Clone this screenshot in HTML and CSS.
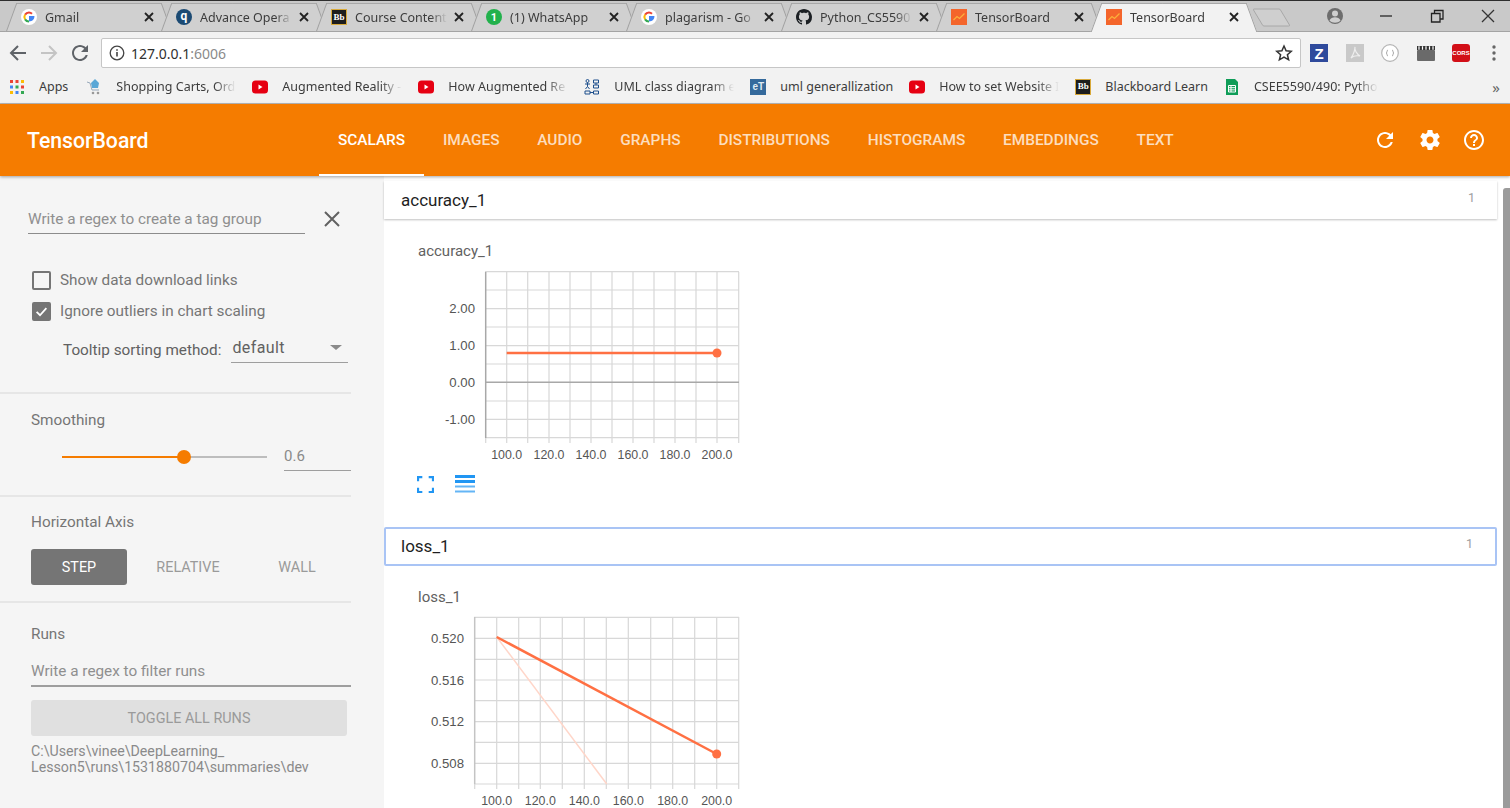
FILE: index.html
```html
<!DOCTYPE html>
<html lang="en">
<head>
    <meta charset="UTF-8">
    <title>TensorBoard</title>
    <link rel="stylesheet" href="styles.css">
</head>
<body>

<svg class="sprite" width="0" height="0">
    <symbol id="g-logo" viewBox="0 0 16 16">
        <circle cx="8" cy="8" r="8" fill="#fff"/>
        <path d="M8 7h5.4c.3 2.800-1.800 5.400-5.400 5.400" fill="#4285f4"/>
        <path d="M8 3.500a4.500 4.500 0 0 1 3 1.200" fill="none" stroke="#ea4335" stroke-width="2"/>
        <path d="M4.100 5.600A4.500 4.500 0 0 1 8 3.500" fill="none" stroke="#ea4335" stroke-width="2"/>
        <path d="M4.100 10.400a4.500 4.500 0 0 1 0-4.800" fill="none" stroke="#fbbc05" stroke-width="2"/>
        <path d="M8 12.500a4.500 4.500 0 0 1-3.900-2.100" fill="none" stroke="#34a853" stroke-width="2"/>
    </symbol>
    <symbol id="close-x" viewBox="0 0 12 12">
        <path d="M2 2l8 8M10 2l-8 8" fill="none" stroke="currentColor" stroke-width="1.800"/>
    </symbol>
    <symbol id="tb-logo" viewBox="0 0 16 16">
        <rect width="16" height="16" fill="#f4652b"/>
        <path d="M2.500 11l3.500-3.500 2.500 2 5-5" fill="none" stroke="#fbb03b" stroke-width="1.300"/>
    </symbol>
    <symbol id="yt-logo" viewBox="0 0 16 16">
        <rect y="1.500" width="16" height="13" rx="3.500" fill="#e60012"/>
        <path d="M6.500 5.500v5l4-2.500z" fill="#fff"/>
    </symbol>
</svg>

<div class="tabstrip">
    <div class="tab">
        <svg class="favicon"><use href="#g-logo"/></svg>
        <span class="tab-title">Gmail</span>
        <svg class="tab-close"><use href="#close-x"/></svg>
    </div>
    <div class="tab">
        <span class="favicon fav-q">q</span>
        <span class="tab-title">Advance Opera</span>
        <svg class="tab-close"><use href="#close-x"/></svg>
    </div>
    <div class="tab">
        <span class="favicon fav-bb">Bb</span>
        <span class="tab-title">Course Content</span>
        <svg class="tab-close"><use href="#close-x"/></svg>
    </div>
    <div class="tab">
        <span class="favicon fav-wa">1</span>
        <span class="tab-title">(1) WhatsApp</span>
        <svg class="tab-close"><use href="#close-x"/></svg>
    </div>
    <div class="tab">
        <svg class="favicon"><use href="#g-logo"/></svg>
        <span class="tab-title">plagarism - Go</span>
        <svg class="tab-close"><use href="#close-x"/></svg>
    </div>
    <div class="tab">
        <svg class="favicon" viewBox="0 0 16 16"><path fill="#1b1f23" d="M8 0C3.58 0 0 3.58 0 8c0 3.54 2.29 6.53 5.47 7.59.4.07.55-.17.55-.38 0-.19-.01-.82-.01-1.49-2.01.37-2.53-.49-2.69-.94-.09-.23-.48-.94-.82-1.13-.28-.15-.68-.52-.01-.53.63-.01 1.08.58 1.23.82.72 1.21 1.87.87 2.33.66.07-.52.28-.87.51-1.07-1.78-.2-3.64-.89-3.64-3.95 0-.87.31-1.59.82-2.15-.08-.2-.36-1.02.08-2.12 0 0 .67-.21 2.2.82.64-.18 1.32-.27 2-.27.68 0 1.36.09 2 .27 1.53-1.04 2.2-.82 2.2-.82.44 1.1.16 1.92.08 2.12.51.56.82 1.27.82 2.15 0 3.07-1.87 3.75-3.65 3.95.29.25.54.73.54 1.48 0 1.07-.01 1.93-.01 2.2 0 .21.15.46.55.38A8.013 8.013 0 0016 8c0-4.42-3.58-8-8-8z"/></svg>
        <span class="tab-title">Python_CS5590</span>
        <svg class="tab-close"><use href="#close-x"/></svg>
    </div>
    <div class="tab">
        <svg class="favicon"><use href="#tb-logo"/></svg>
        <span class="tab-title">TensorBoard</span>
        <svg class="tab-close"><use href="#close-x"/></svg>
    </div>
    <div class="tab active">
        <svg class="favicon"><use href="#tb-logo"/></svg>
        <span class="tab-title">TensorBoard</span>
        <svg class="tab-close"><use href="#close-x"/></svg>
    </div>
    <svg class="newtab" viewBox="0 0 38 19"><path d="M1 1h25q1 0 1.500 1l9 15q.5 1-1 1H11q-1 0-1.500-1L.5 2q-.5-1 .5-1z" fill="#cfcfcf" stroke="#a8a8a8"/></svg>

    <div class="window-controls">
        <svg viewBox="0 0 20 20"><circle cx="10" cy="10" r="8" fill="#6d6d6d"/><circle cx="10" cy="7.500" r="3" fill="#cfcfcf"/><path d="M4.500 14.500c1-2.500 3-3.200 5.500-3.200s4.500.7 5.500 3.200c-1.500 1.500-3.300 2.200-5.500 2.200s-4-.7-5.500-2.200z" fill="#cfcfcf"/></svg>
        <svg viewBox="0 0 20 20"><path d="M4 10h12" stroke="#333" stroke-width="1.400"/></svg>
        <svg viewBox="0 0 20 20"><path d="M4.500 7.500h8.500v8.500H4.500zM7.500 7.500V4.500H16v8.500h-3" fill="none" stroke="#222" stroke-width="1.300"/></svg>
        <svg viewBox="0 0 20 20"><path d="M4 4l12 12M16 4L4 16" stroke="#333" stroke-width="1.300"/></svg>
    </div>
</div>

<div class="toolbar">
    <svg class="nav-icon" viewBox="0 0 24 24"><path d="M20 12H5M12 5l-7 7 7 7" fill="none" stroke="#5f6368" stroke-width="2"/></svg>
    <svg class="nav-icon" viewBox="0 0 24 24"><path d="M4 12h15M12 5l7 7-7 7" fill="none" stroke="#c4c4c4" stroke-width="2"/></svg>
    <svg class="nav-icon" viewBox="0 0 24 24"><path fill="#5f6368" d="M17.650 6.350C16.200 4.900 14.210 4 12 4c-4.420 0-7.990 3.580-7.990 8s3.570 8 7.990 8c3.730 0 6.840-2.550 7.730-6h-2.080c-.82 2.330-3.040 4-5.650 4-3.310 0-6-2.690-6-6s2.690-6 6-6c1.660 0 3.140.69 4.220 1.780L13 11h7V4l-2.350 2.350z"/></svg>
    <div class="omnibox">
        <svg class="info-icon" viewBox="0 0 16 16"><circle cx="8" cy="8" r="6.800" fill="none" stroke="#444" stroke-width="1.300"/><path d="M8 7v4.500M8 4.300v1.500" stroke="#444" stroke-width="1.600"/></svg>
        <span class="url">127.0.0.1<span class="url-port">:6006</span></span>
        <svg class="star" viewBox="0 0 18 18"><path d="M9 2l2.100 4.800 5.200.5-3.900 3.400 1.200 5.100L9 13.100l-4.600 2.700 1.200-5.100L1.700 7.300l5.200-.5z" fill="none" stroke="#333" stroke-width="1.500"/></svg>
    </div>
    <div class="extensions">
        <span class="ext ext-z">Z</span>
        <svg class="ext" viewBox="0 0 18 18"><rect width="18" height="18" fill="#c9c9c9"/><path d="M9 3c-1 3 2 7 5 9-3-.5-7 0-9 2 2-3 4-8 4-11z" fill="none" stroke="#eee" stroke-width="1.200"/></svg>
        <svg class="ext" viewBox="0 0 18 18"><circle cx="9" cy="9" r="8.300" fill="#fff" stroke="#b5b5b5" stroke-width="1.200"/><path d="M7 6c-1.500 0-.5 3-2 3 1.500 0 .5 3 2 3M11 6c1.500 0 .5 3 2 3-1.500 0-.5 3-2 3" fill="none" stroke="#999" stroke-width=".9"/></svg>
        <svg class="ext" viewBox="0 0 18 18"><rect y="6" width="18" height="11" rx="1" fill="#6a6a6a"/><rect y="2" width="18" height="4" fill="#333"/><path d="M2 2.200v3.600M5.500 2.200v3.600M9 2.200v3.600M12.500 2.200v3.600M16 2.200v3.600" stroke="#fff" stroke-width="1.200"/></svg>
        <span class="ext ext-cors">CORS</span>
        <svg class="ext ext-menu" viewBox="0 0 18 18"><circle cx="9" cy="3" r="1.700" fill="#666"/><circle cx="9" cy="9" r="1.700" fill="#666"/><circle cx="9" cy="15" r="1.700" fill="#666"/></svg>
    </div>
</div>

<div class="bookmarks">
    <a class="bm">
        <svg class="bm-icon" viewBox="0 0 16 16">
            <path d="M1 1h3v3H1z" fill="#ea4335"/><path d="M6.500 1h3v3h-3z" fill="#ea4335"/><path d="M12 1h3v3h-3z" fill="#fbbc05"/>
            <path d="M1 6.500h3v3H1z" fill="#4285f4"/><path d="M6.500 6.500h3v3h-3z" fill="#34a853"/><path d="M12 6.500h3v3h-3z" fill="#ea4335"/>
            <path d="M1 12h3v3H1z" fill="#fbbc05"/><path d="M6.500 12h3v3h-3z" fill="#4285f4"/><path d="M12 12h3v3h-3z" fill="#34a853"/>
        </svg>
        <span class="bm-text short">Apps</span>
    </a>
    <a class="bm">
        <svg class="bm-icon" viewBox="0 0 16 16"><path d="M1 3l3 1 2 7h7" fill="none" stroke="#9ab" stroke-width="1"/><path d="M9 0l4 4-1 5H6L5 4z" fill="#5aa7d6"/><circle cx="7" cy="14" r="1.300" fill="#999"/><circle cx="12" cy="14" r="1.300" fill="#999"/></svg>
        <span class="bm-text">Shopping Carts, Ord</span>
    </a>
    <a class="bm">
        <svg class="bm-icon"><use href="#yt-logo"/></svg>
        <span class="bm-text">Augmented Reality -</span>
    </a>
    <a class="bm">
        <svg class="bm-icon"><use href="#yt-logo"/></svg>
        <span class="bm-text">How Augmented Re</span>
    </a>
    <a class="bm">
        <svg class="bm-icon" viewBox="0 0 16 16"><g fill="none" stroke="#1d4f8c" stroke-width="1"><circle cx="3.500" cy="2" r="1.500"/><path d="M3.500 3.500v4M1 5h5M1.500 10l2-2.500 2 2.500"/><path d="M9.500 1h5v3h-5zM9.500 6h5v3h-5zM1 12h5v3H1zM9.500 12h5v3h-5zM6 13.500h3.500M12 4v2"/></g></svg>
        <span class="bm-text">UML class diagram e</span>
    </a>
    <a class="bm">
        <span class="bm-icon fav-et">eT</span>
        <span class="bm-text short">uml generallization</span>
    </a>
    <a class="bm">
        <svg class="bm-icon"><use href="#yt-logo"/></svg>
        <span class="bm-text">How to set Website I</span>
    </a>
    <a class="bm">
        <span class="bm-icon fav-bb">Bb</span>
        <span class="bm-text short">Blackboard Learn</span>
    </a>
    <a class="bm">
        <svg class="bm-icon" viewBox="0 0 16 16"><path d="M2 0h9l3 3v13H2z" fill="#0f9d58"/><path d="M4.500 6.500h7v6.500h-7zM4.500 8.700h7M4.500 10.900h7M7 6.500V13" fill="none" stroke="#fff" stroke-width="1"/></svg>
        <span class="bm-text last">CSEE5590/490: Pytho</span>
    </a>
    <span class="bm-more">&raquo;</span>
</div>

<header class="tb-header">
    <div class="tb-brand">TensorBoard</div>
    <nav class="tb-nav">
        <a class="tb-tab selected">Scalars</a>
        <a class="tb-tab">Images</a>
        <a class="tb-tab">Audio</a>
        <a class="tb-tab">Graphs</a>
        <a class="tb-tab">Distributions</a>
        <a class="tb-tab">Histograms</a>
        <a class="tb-tab">Embeddings</a>
        <a class="tb-tab">Text</a>
    </nav>
    <div class="tb-actions">
        <svg viewBox="0 0 24 24"><path d="M17.650 6.350C16.200 4.900 14.210 4 12 4c-4.420 0-7.990 3.580-7.990 8s3.570 8 7.990 8c3.730 0 6.840-2.550 7.730-6h-2.080c-.82 2.330-3.040 4-5.650 4-3.310 0-6-2.690-6-6s2.690-6 6-6c1.660 0 3.140.69 4.220 1.780L13 11h7V4l-2.350 2.350z"/></svg>
        <svg viewBox="0 0 24 24"><path d="M19.430 12.980c.04-.32.07-.64.07-.98s-.03-.66-.07-.98l2.110-1.650c.19-.15.24-.42.12-.64l-2-3.460c-.12-.22-.39-.3-.61-.22l-2.490 1c-.52-.4-1.080-.73-1.690-.98l-.38-2.650C14.460 2.180 14.250 2 14 2h-4c-.25 0-.46.18-.49.42l-.38 2.650c-.61.25-1.170.59-1.690.98l-2.490-1c-.23-.09-.49 0-.61.22l-2 3.460c-.13.22-.07.49.12.64l2.110 1.650c-.04.32-.07.65-.07.98s.03.66.07.98l-2.110 1.650c-.19.15-.24.42-.12.64l2 3.460c.12.22.39.3.61.22l2.490-1c.52.4 1.080.73 1.690.98l.38 2.650c.03.24.24.42.49.42h4c.25 0 .46-.18.49-.42l.38-2.650c.61-.25 1.170-.59 1.690-.98l2.490 1c.23.09.49 0 .61-.22l2-3.460c.12-.22.07-.49-.12-.64l-2.110-1.650zM12 15.500c-1.930 0-3.500-1.570-3.500-3.500s1.570-3.500 3.500-3.500 3.500 1.570 3.500 3.500-1.570 3.500-3.500 3.500z"/></svg>
        <svg viewBox="0 0 24 24"><path d="M11 18h2v-2h-2v2zm1-16C6.480 2 2 6.480 2 12s4.480 10 10 10 10-4.480 10-10S17.520 2 12 2zm0 18c-4.410 0-8-3.590-8-8s3.590-8 8-8 8 3.590 8 8-3.590 8-8 8zm0-14c-2.210 0-4 1.790-4 4h2c0-1.100.9-2 2-2s2 .9 2 2c0 2-3 1.750-3 5h2c0-2.250 3-2.500 3-5 0-2.210-1.790-4-4-4z"/></svg>
    </div>
</header>

<div class="tb-body">
    <aside class="sidebar">
        <section class="side-section settings">
            <div class="group-row">
                <div class="text-input">Write a regex to create a tag group</div>
                <svg class="group-clear" viewBox="0 0 18 18"><path d="M2 2l14 14M16 2L2 16" fill="none" stroke="#616161" stroke-width="2"/></svg>
            </div>
            <label class="check-row"><span class="checkbox"></span>Show data download links</label>
            <label class="check-row"><span class="checkbox checked"><svg viewBox="0 0 20 20"><path d="M3.500 10.500l4.500 4.500 8.500-9.500" fill="none" stroke="#fff" stroke-width="2.400"/></svg></span>Ignore outliers in chart scaling</label>
            <div class="tooltip-row">
                <span class="tooltip-label">Tooltip sorting method:</span>
                <div class="dropdown">default<span class="caret"></span></div>
            </div>
        </section>

        <section class="side-section smoothing">
            <div class="side-title">Smoothing</div>
            <div class="slider-row">
                <div class="slider"><span class="slider-fill"></span><span class="slider-knob"></span></div>
                <div class="slider-value">0.6</div>
            </div>
        </section>

        <section class="side-section axis">
            <div class="side-title">Horizontal Axis</div>
            <div class="axis-buttons">
                <span class="axis-btn on">Step</span>
                <span class="axis-btn">Relative</span>
                <span class="axis-btn">Wall</span>
            </div>
        </section>

        <section class="side-section runs">
            <div class="side-title">Runs</div>
            <div class="runs-filter">Write a regex to filter runs</div>
            <div class="toggle-runs">Toggle all runs</div>
            <div class="run-path">C:\Users\vinee\DeepLearning_<br>Lesson5\runs\1531880704\summaries\dev</div>
        </section>
    </aside>

    <main class="content">
        <div class="cards">
            <div class="cat-header">accuracy_1<span class="cat-count">1</span></div>
            <div class="chart-card accuracy-card">
                <div class="chart-title">accuracy_1</div>
                <svg class="chart" width="345" height="205">
                    <path class="grid" d="M106.700 10V181M127.700 10V181M149 10V181M170 10V181M191 10V181M212 10V181M233 10V181M254 10V181M275 10V181M296 10V181M317 10V181M338.700 10V181M85.700 176V181"/>
                    <path class="grid" d="M85 9.700H339M85 28H339M85 46.700H339M85 65H339M85 83.700H339M85 102H339M85 139H339M85 157.300H339M85 175.700H339"/>
                    <path class="axis-line" d="M85.700 10V176M85.700 120.300H339"/>
                    <text class="y-tick" x="75" y="51">2.00</text>
                    <text class="y-tick" x="75" y="88">1.00</text>
                    <text class="y-tick" x="75" y="125">0.00</text>
                    <text class="y-tick" x="75" y="162">-1.00</text>
                    <text class="x-tick" x="106.700" y="196.500">100.0</text>
                    <text class="x-tick" x="149" y="196.500">120.0</text>
                    <text class="x-tick" x="191" y="196.500">140.0</text>
                    <text class="x-tick" x="233" y="196.500">160.0</text>
                    <text class="x-tick" x="275" y="196.500">180.0</text>
                    <text class="x-tick" x="317" y="196.500">200.0</text>
                    <path class="series" d="M106.700 91H317"/>
                    <circle class="series-dot" cx="317" cy="91" r="4.500"/>
                </svg>
                <div class="chart-actions">
                    <svg class="fit-icon" viewBox="0 0 16 16"><path d="M1 5V1h4M11 1h4v4M15 11v4h-4M5 15H1v-4" fill="none" stroke="#2196f3" stroke-width="2"/></svg>
                    <svg class="lines-icon" viewBox="0 0 20 18"><path d="M0 1.500h20M0 6.500h20" stroke="#2196f3" stroke-width="3"/><path d="M0 11.500h20M0 16.500h20" stroke="#64b5f6" stroke-width="2"/></svg>
                </div>
            </div>

            <div class="cat-header focused">loss_1<span class="cat-count">1</span></div>
            <div class="chart-card">
                <div class="chart-title">loss_1</div>
                <svg class="chart" width="345" height="200">
                    <path class="grid" d="M96.700 9V181M118.700 9V181M140.300 9V181M162.300 9V181M184.300 9V181M206.300 9V181M228.300 9V181M250.700 9V181M272.700 9V181M294.700 9V181M316.700 9V181M338.700 9V181M74.700 176V181"/>
                    <path class="grid" d="M74 9.300H339M74 30.300H339M74 51.300H339M74 72H339M74 92.700H339M74 113.700H339M74 134.300H339M74 155.300H339M74 176H339"/>
                    <path class="axis-line soft" d="M74.700 9V176"/>
                    <text class="y-tick" x="64" y="35">0.520</text>
                    <text class="y-tick" x="64" y="76.500">0.516</text>
                    <text class="y-tick" x="64" y="118">0.512</text>
                    <text class="y-tick" x="64" y="159.500">0.508</text>
                    <text class="x-tick" x="96.700" y="196.500">100.0</text>
                    <text class="x-tick" x="140.300" y="196.500">120.0</text>
                    <text class="x-tick" x="184.300" y="196.500">140.0</text>
                    <text class="x-tick" x="228.300" y="196.500">160.0</text>
                    <text class="x-tick" x="272.700" y="196.500">180.0</text>
                    <text class="x-tick" x="316.700" y="196.500">200.0</text>
                    <path class="series raw" d="M96.700 29L206.700 176"/>
                    <path class="series" d="M96.700 29L316.700 146"/>
                    <circle class="series-dot" cx="316.700" cy="146" r="4.500"/>
                </svg>
            </div>
        </div>
        <div class="scrollbar"><span class="scroll-thumb"></span></div>
    </main>
</div>

</body>
</html>
```

FILE: styles.css
```css
* {
    box-sizing: border-box;
}
html, body {
    height: 100%;
}
body {
    margin: 0;
    display: flex;
    flex-direction: column;
    height: 808px;
    overflow: hidden;
    font-family: Roboto, Arial, sans-serif;
    background-color: #fff;
    color: #212121;
}
.sprite {
    position: absolute;
}

/* browser tabs */
.tabstrip {
    position: relative;
    z-index: 0;
    flex: none;
    display: flex;
    align-items: flex-end;
    height: 32px;
    padding-left: 6px;
    background-color: #c9c9c9;
    border-top: 1px solid #2e2e2e;
    border-bottom: 1px solid #a4a4a4;
    font-family: "Noto Sans", Arial, sans-serif;
    font-size: 12.500px;
    color: #3c3c3c;
}
.tab {
    position: relative;
    display: flex;
    align-items: center;
    flex: none;
    width: 166px;
    height: 31px;
    margin-right: -11px;
    margin-bottom: -1px;
    padding: 1px 17px 0 15px;
}
.tab::before, .tab::after {
    content: "";
    position: absolute;
    z-index: -1;
    top: 2px;
    bottom: 0;
    width: 50%;
    background-color: #d0d0d0;
    border-top: 1px solid #a8a8a8;
    border-bottom: 1px solid #a4a4a4;
}
.tab::before {
    left: 5px;
    border-left: 1px solid #a0a0a0;
    transform: skewX(-20deg);
}
.tab::after {
    right: 5px;
    border-right: 1px solid #a0a0a0;
    transform: skewX(20deg);
}
.tab.active {
    z-index: 1;
}
.tab.active::before, .tab.active::after {
    background-color: #f2f2f2;
    border-bottom: none;
}
.favicon {
    flex: none;
    width: 16px;
    height: 16px;
    margin-right: 8px;
}
.tab-title {
    flex: 1;
    min-width: 0;
    overflow: hidden;
    white-space: nowrap;
    -webkit-mask-image: linear-gradient(to right, #000 82%, transparent);
    mask-image: linear-gradient(to right, #000 82%, transparent);
}
.tab-close {
    flex: none;
    width: 12px;
    height: 12px;
    margin-left: 6px;
    color: #222;
}
.fav-q {
    display: flex;
    align-items: center;
    justify-content: center;
    border-radius: 50%;
    background-color: #1b4a73;
    color: #fff;
    font: bold 12px/1 Roboto, sans-serif;
    padding-bottom: 2px;
}
.fav-bb {
    display: flex;
    align-items: center;
    justify-content: center;
    background-color: #1d1d1d;
    border: 1px solid #d8a93a;
    color: #fff;
    font: bold 9px/1 "Liberation Serif", serif;
}
.fav-wa {
    display: flex;
    align-items: center;
    justify-content: center;
    border-radius: 50%;
    background-color: #22b14c;
    color: #fff;
    font: bold 11px/1 Roboto, sans-serif;
}
.newtab {
    flex: none;
    width: 38px;
    height: 19px;
    margin: 0 0 4px 7px;
}
.window-controls {
    display: flex;
    gap: 31px;
    margin-left: auto;
    padding-right: 12px;
    align-self: center;
}
.window-controls svg {
    width: 20px;
    height: 20px;
}

/* address bar */
.toolbar {
    flex: none;
    display: flex;
    align-items: center;
    height: 37px;
    padding: 5px 0 0 6px;
    background-color: #f2f2f2;
}
.nav-icon {
    flex: none;
    width: 24px;
    height: 24px;
    margin-right: 7px;
}
.toolbar .nav-icon:nth-child(3) {
    margin-right: 9px;
}
.omnibox {
    display: flex;
    align-items: center;
    width: 1200px;
    height: 30px;
    padding: 0 7px;
    background-color: #fff;
    border: 1px solid #c6c6c6;
    border-radius: 2px;
}
.info-icon {
    width: 16px;
    height: 16px;
    margin-right: 6px;
}
.url {
    font-family: "Noto Sans", Arial, sans-serif;
    font-size: 14px;
    color: #303030;
}
.url-port {
    color: #8a8a8a;
}
.star {
    width: 18px;
    height: 18px;
    margin-left: auto;
}
.extensions {
    display: flex;
    align-items: center;
    gap: 17.500px;
    margin-left: 9px;
}
.ext {
    flex: none;
    display: flex;
    align-items: center;
    justify-content: center;
    width: 18px;
    height: 18px;
}
.ext-z {
    background-color: #2f4a9c;
    color: #fff;
    font: bold 15px/1 "Liberation Sans", sans-serif;
}
.ext-cors {
    background-color: #d20f17;
    border-radius: 3px;
    color: #fff;
    font: bold 6px/1 "Liberation Sans", sans-serif;
}
.ext-menu {
    margin-left: -3px;
}

/* bookmarks */
.bookmarks {
    flex: none;
    display: flex;
    align-items: center;
    gap: 16px;
    height: 35px;
    padding: 1px 10px 0 9px;
    background-color: #f2f2f2;
    border-bottom: 1px solid #b9b9b9;
    font-family: "Noto Sans", Arial, sans-serif;
    font-size: 12.500px;
    color: #3c3c3c;
}
.bm {
    display: flex;
    align-items: center;
    flex: none;
}
.bm:first-child {
    margin-right: 2px;
}
.bm-icon {
    flex: none;
    width: 16px;
    height: 16px;
    margin-right: 14px;
}
.bm-text {
    width: 120px;
    overflow: hidden;
    white-space: nowrap;
    -webkit-mask-image: linear-gradient(to right, #000 82%, transparent);
    mask-image: linear-gradient(to right, #000 82%, transparent);
}
.bm-text.last {
    width: auto;
}
.bm-text.short {
    width: auto;
    -webkit-mask-image: none;
    mask-image: none;
}
.fav-et {
    display: flex;
    align-items: center;
    justify-content: center;
    background-color: #356a9c;
    color: #dfe9f2;
    font: bold 10px/1 "Liberation Sans", sans-serif;
}
.bm-more {
    margin-left: auto;
    font-size: 15px;
    color: #666;
}

/* tensorboard header */
.tb-header {
    position: relative;
    z-index: 2;
    flex: none;
    display: flex;
    align-items: center;
    height: 72px;
    background-color: #f57c00;
    box-shadow: 0 1px 3px rgba(0, 0, 0, 0.35);
    color: #fff;
}
.tb-brand {
    flex: none;
    width: 319px;
    padding-left: 27px;
    font-size: 21.200px;
    font-weight: 500;
}
.tb-nav {
    display: flex;
    height: 100%;
}
.tb-tab {
    display: flex;
    align-items: center;
    padding: 0 18.900px;
    border-top: 2px solid transparent;
    border-bottom: 2px solid transparent;
    font-size: 15.400px;
    font-weight: 500;
    text-transform: uppercase;
    color: rgba(255, 255, 255, 0.75);
}
.tb-tab.selected {
    border-bottom-color: #fff;
    color: #fff;
}
.tb-actions {
    display: flex;
    gap: 20.500px;
    margin-left: auto;
    padding-right: 24px;
}
.tb-actions svg {
    width: 24px;
    height: 24px;
    fill: #fff;
}

/* sidebar */
.tb-body {
    flex: 1;
    display: flex;
    min-height: 0;
}
.sidebar {
    flex: none;
    width: 384px;
    padding-right: 33px;
    background-color: #f5f5f5;
    font-size: 15.300px;
    color: #616161;
}
.side-section {
    border-bottom: 2px solid #e6e6e6;
}
.settings {
    height: 218px;
    padding-top: 28px;
}
.group-row {
    display: flex;
    align-items: center;
    padding-left: 28px;
}
.text-input {
    width: 277px;
    height: 30px;
    padding-top: 6px;
    border-bottom: 1px solid #8c8c8c;
    color: #8f8f8f;
}
.group-clear {
    width: 18px;
    height: 18px;
    margin-left: 18px;
}
.check-row {
    display: flex;
    align-items: center;
    height: 20px;
    margin: 0 0 11px 32px;
    color: #757575;
}
.group-row + .check-row {
    margin-top: 36px;
}
.checkbox {
    flex: none;
    width: 19px;
    height: 19px;
    margin-right: 9px;
    border: 2px solid #757575;
    border-radius: 2px;
}
.checkbox svg {
    display: block;
    width: 15px;
    height: 15px;
}
.checkbox.checked {
    background-color: #757575;
}
.tooltip-row {
    display: flex;
    align-items: flex-end;
    margin-top: 15px;
    padding-left: 63px;
}
.tooltip-label {
    padding-bottom: 4px;
}
.dropdown {
    display: flex;
    justify-content: space-between;
    align-items: center;
    width: 117px;
    height: 27px;
    margin-left: 10px;
    padding: 0 6px 3px 1px;
    border-bottom: 1px solid #9e9e9e;
    font-size: 16px;
    letter-spacing: 0.4px;
}
.caret {
    width: 0;
    height: 0;
    border-left: 6px solid transparent;
    border-right: 6px solid transparent;
    border-top: 5px solid #8a8a8a;
}
.smoothing {
    height: 103px;
    padding-top: 17px;
}
.side-title {
    padding-left: 31px;
    color: #757575;
}
.slider-row {
    display: flex;
    align-items: center;
    margin-top: 13px;
    padding-left: 62px;
}
.slider {
    position: relative;
    width: 205px;
    height: 2px;
    background-color: #bdbdbd;
}
.slider-fill {
    display: block;
    width: 122px;
    height: 2px;
    background-color: #f57c00;
}
.slider-knob {
    position: absolute;
    left: 115px;
    top: -6px;
    width: 14px;
    height: 14px;
    border-radius: 50%;
    background-color: #f57c00;
}
.slider-value {
    width: 67px;
    height: 29px;
    margin-left: 17px;
    padding-top: 5px;
    border-bottom: 1px solid #9e9e9e;
    font-size: 15px;
    color: #8a8a8a;
}
.axis {
    height: 106px;
    padding-top: 16px;
}
.axis-buttons {
    display: flex;
    margin: 18px 0 0 31px;
}
.axis-btn {
    flex: none;
    display: flex;
    align-items: center;
    justify-content: center;
    width: 96px;
    height: 36px;
    margin-right: 13px;
    border-radius: 3px;
    font-size: 14.400px;
    text-transform: uppercase;
    color: #9a9a9a;
}
.axis-btn.on {
    background-color: #757575;
    color: #fff;
}
.runs {
    padding-top: 22px;
    border-bottom: none;
}
.runs-filter {
    height: 29px;
    margin: 15px 0 0 31px;
    padding-top: 4px;
    border-bottom: 2px solid #9e9e9e;
    color: #8f8f8f;
}
.toggle-runs {
    display: flex;
    align-items: center;
    justify-content: center;
    width: 316px;
    height: 36px;
    margin: 13px 0 0 31px;
    border-radius: 3px;
    background-color: #e0e0e0;
    font-size: 14.400px;
    text-transform: uppercase;
    color: #9a9a9a;
}
.run-path {
    margin: 7px 0 0 31px;
    width: 330px;
    font-size: 14.200px;
    line-height: 16px;
    color: #8a8a8a;
}

/* charts */
.content {
    flex: 1;
    display: flex;
    min-width: 0;
    padding-top: 5px;
}
.cards {
    flex: 1;
    min-width: 0;
}
.cat-header {
    display: flex;
    justify-content: space-between;
    align-items: center;
    height: 38px;
    padding: 0 22px 0 17px;
    background-color: #fff;
    box-shadow: 0 1px 2px rgba(0, 0, 0, 0.25);
    font-size: 17px;
    color: #1e1e1e;
}
.cat-header.focused {
    height: 39px;
    margin-bottom: -1px;
    border: 2px solid #a9c4f5;
    border-radius: 2px;
    padding: 0 22px 1px 15px;
    box-shadow: none;
}
.cat-count {
    margin-top: -6px;
    font-size: 12.500px;
    color: #9e9e9e;
}
.chart-card {
    padding: 23px 0 0 16px;
}
.accuracy-card {
    height: 308px;
}
.chart-title {
    height: 19px;
    padding-left: 18px;
    font-size: 15px;
    line-height: 19px;
    color: #616161;
}
.chart {
    display: block;
    margin-top: 1px;
}
.grid {
    fill: none;
    stroke: #d8d8d8;
    stroke-width: 1.200;
}
.axis-line {
    fill: none;
    stroke: #a8a8a8;
    stroke-width: 1.500;
}
.axis-line.soft {
    stroke: #c4c4c4;
}
.y-tick {
    text-anchor: end;
    fill: #555;
    font-family: "Liberation Sans", Arial, sans-serif;
    font-size: 13.200px;
}
.x-tick {
    text-anchor: middle;
    fill: #555;
    font-family: "Liberation Sans", Arial, sans-serif;
    font-size: 12.400px;
}
.series {
    fill: none;
    stroke: #ff7043;
    stroke-width: 2.500;
}
.series.raw {
    stroke: #ffd6c9;
    stroke-width: 1.500;
}
.series-dot {
    fill: #ff7043;
}
.chart-actions {
    display: flex;
    align-items: center;
    gap: 21px;
    margin: 8px 0 0 17px;
}
.fit-icon {
    width: 17px;
    height: 17px;
}
.lines-icon {
    width: 20px;
    height: 18px;
}
.scrollbar {
    flex: none;
    width: 13px;
    padding: 7px 0 0 6px;
}
.scroll-thumb {
    display: block;
    width: 7px;
    height: 100%;
    border-radius: 3px 0 0 0;
    background-color: #9b9b9b;
}
```
